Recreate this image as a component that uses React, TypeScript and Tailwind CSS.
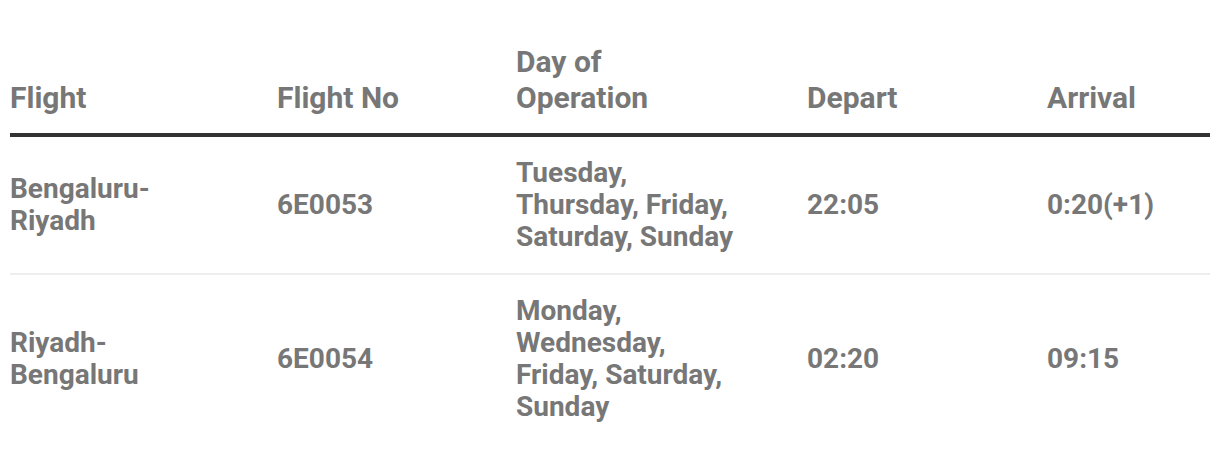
const rows = [
  {
    route: 'Bengaluru-Riyadh',
    no: '6E0053',
    days: 'Tuesday, Thursday, Friday, Saturday, Sunday',
    depart: '22:05',
    arrival: '0:20(+1)',
  },
  {
    route: 'Riyadh-Bengaluru',
    no: '6E0054',
    days: 'Monday, Wednesday, Friday, Saturday, Sunday',
    depart: '02:20',
    arrival: '09:15',
  },
];

export default function App() {
  return (
    <div className="bg-white px-[10px] pt-[44px] font-['Roboto',sans-serif] font-bold text-[#777]">
      <table className="w-[1200px] table-fixed border-collapse text-left">
        <thead>
          <tr className="border-b-4 border-[#333]">
            <th className="w-[267px] pb-[17px] align-bottom text-[30px] leading-[36px]">Flight</th>
            <th className="w-[239px] pb-[17px] align-bottom text-[30px] leading-[36px]">Flight No</th>
            <th className="w-[291px] pb-[17px] pr-[72px] align-bottom text-[30px] leading-[36px]">Day of Operation</th>
            <th className="w-[240px] pb-[17px] align-bottom text-[30px] leading-[36px]">Depart</th>
            <th className="pb-[17px] align-bottom text-[30px] leading-[36px]">Arrival</th>
          </tr>
        </thead>
        <tbody>
          {rows.map((r, i) => (
            <tr key={r.no} className={i === 0 ? 'border-b-2 border-[#eee]' : ''}>
              <td className="py-[20px] pr-[110px] align-middle text-[28px] leading-[32px]">{r.route}</td>
              <td className="py-[20px] align-middle text-[28px] leading-[32px]">{r.no}</td>
              <td className="py-[20px] pr-[72px] align-middle text-[28px] leading-[32px]">{r.days}</td>
              <td className="py-[20px] align-middle text-[28px] leading-[32px]">{r.depart}</td>
              <td className="py-[20px] align-middle text-[28px] leading-[32px]">{r.arrival}</td>
            </tr>
          ))}
        </tbody>
      </table>
    </div>
  );
}
